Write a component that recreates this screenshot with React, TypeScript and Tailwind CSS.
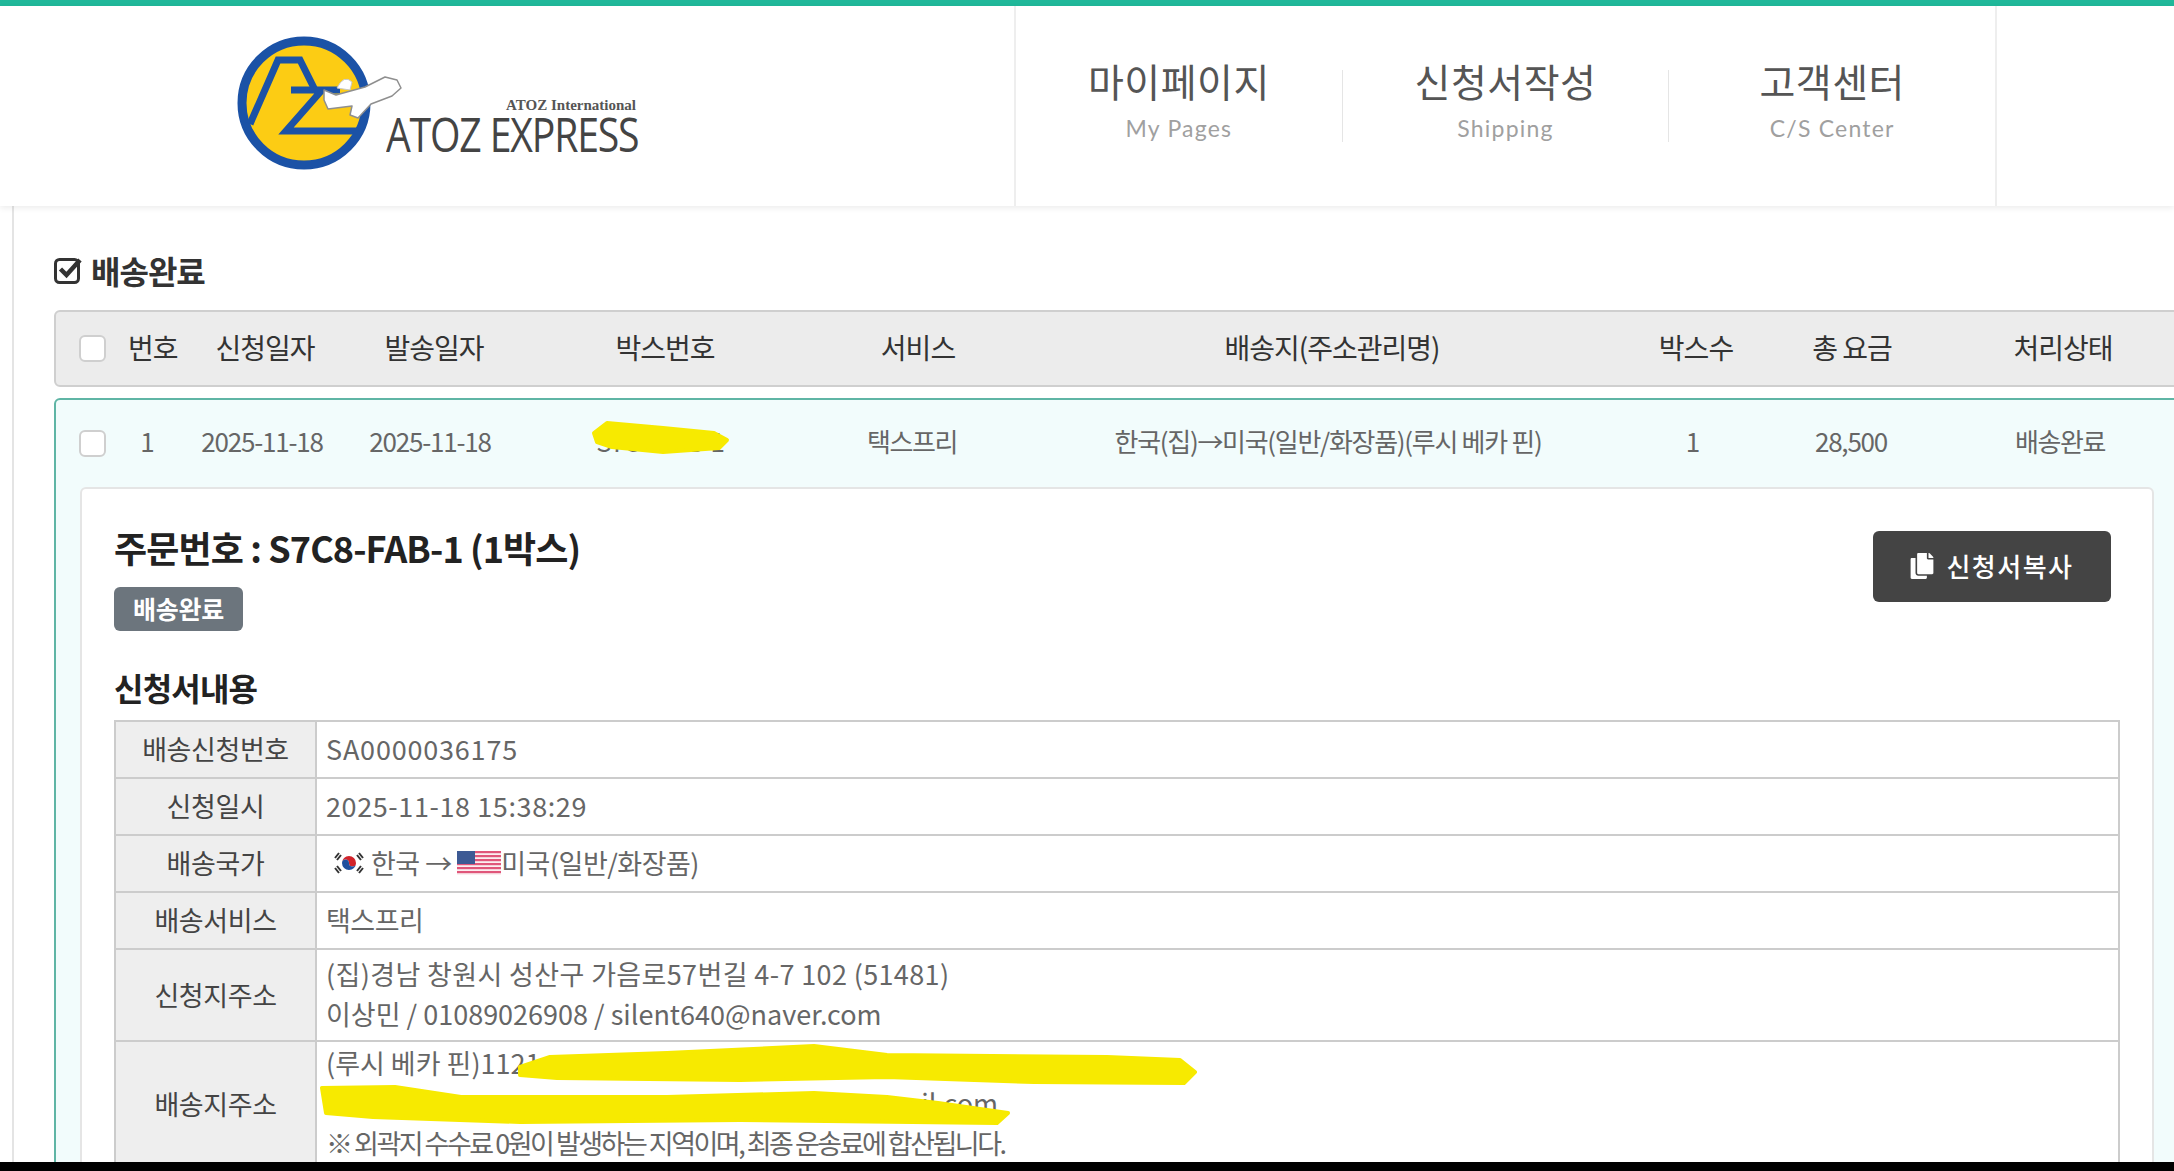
import React from 'react';
import { FaCopy } from 'react-icons/fa';

const FONT = '"Noto Sans CJK KR", "Noto Sans", sans-serif';

const HEAD_COLS = [
  { label: '번호', w: 'w-[42px]' },
  { label: '신청일자', w: 'w-[190px]' },
  { label: '발송일자', w: 'w-[148px]' },
  { label: '박스번호', w: 'w-[314px]' },
  { label: '서비스', w: 'w-[192px]' },
  { label: '배송지(주소관리명)', w: 'w-[636px]' },
  { label: '박스수', w: 'w-[92px]' },
  { label: '총 요금', w: 'w-[220px]' },
  { label: '처리상태', w: 'w-[202px]' },
];

const ROW_COLS = [
  { value: '1', w: 'w-[38px]', cls: 'tracking-[-1px]' },
  { value: '2025-11-18', w: 'w-[192px]', cls: 'tracking-[-1.2px]' },
  { value: '2025-11-18', w: 'w-[144px]', cls: 'tracking-[-1.2px]' },
  { value: 'S7C8-FAB-1', w: 'w-[316px]', cls: 'tracking-[-1.2px]' },
  { value: '택스프리', w: 'w-[188px]', cls: 'tracking-[-1.4px]' },
  { value: '한국(집)→미국(일반/화장품)(루시 베카 핀)', w: 'w-[644px]', cls: 'tracking-[-1.3px]' },
  { value: '1', w: 'w-[86px]', cls: '' },
  { value: '28,500', w: 'w-[230px]', cls: 'tracking-[-1.2px]' },
  { value: '배송완료', w: 'w-[188px]', cls: 'tracking-[-1.4px]' },
];

const NavItem = ({ title, sub }: { title: string; sub: string }) => (
  <div className="flex-1 flex flex-col items-center pt-[51px]">
    <div className="text-[39px] leading-[46px] font-normal text-[#555] tracking-[0.5px]">{title}</div>
    <div className="mt-[10px] text-[23px] leading-[30px] font-normal text-[#a0a0a0] tracking-[1.2px]" style={{ fontFamily: 'Lato, sans-serif' }}>
      {sub}
    </div>
  </div>
);

const Logo = () => (
  <div className="flex items-start pl-[236px] pt-[24px]">
    <svg width="168" height="145" viewBox="236 30 168 145" className="shrink-0">
      <circle cx="304" cy="103" r="62" fill="#fccc14" stroke="#1b52a6" strokeWidth="9" />
      <path d="M250 124 L278 60 L300 60 L315 90" fill="none" stroke="#1b52a6" strokeWidth="7" strokeLinejoin="miter" />
      <path d="M291 90 H340 M322 90 L286 131 H358" fill="none" stroke="#1b52a6" strokeWidth="7" />
      <path d="M337 88 Q344 74 352 82 L350 90 Z" fill="#fff" stroke="#c9c9c9" strokeWidth="1" />
      <path
        d="M324 90 L336 95 L365 87 L385 77 L397 80 L401 88 L392 96 L371 104 L358 118 L350 115 L352 106 L328 109 L324 100 Z"
        fill="#fff"
        stroke="#8f8f8f"
        strokeWidth="1.5"
        strokeLinejoin="round"
      />
    </svg>
    <div className="ml-[-18px] mt-[67px] w-[252px] flex flex-col items-end">
      <div className="text-[15px] leading-[16px] mb-[2px] mr-[2px] font-bold text-[#555] whitespace-nowrap" style={{ fontFamily: '"Liberation Serif", serif' }}>
        ATOZ International
      </div>
      <div
        className="self-start origin-left scale-x-[0.834] text-[47px] leading-[38px] text-[#444] tracking-[-1.4px] whitespace-nowrap"
        style={{ fontFamily: '"Open Sans", sans-serif' }}
      >
        ATOZ EXPRESS
      </div>
    </div>
  </div>
);

const Checkbox = () => <div className="w-[27px] h-[27px] bg-white border-2 border-[#cfcfcf] rounded-[6px] shrink-0" />;

const CheckedIcon = () => (
  <svg width="30" height="28" viewBox="0 0 30 28" className="shrink-0">
    <rect x="1.5" y="3.5" width="23" height="23" rx="4" fill="none" stroke="#333" strokeWidth="3" />
    <path d="M6.5 13 L12.5 19 L26 4" fill="none" stroke="#333" strokeWidth="4.5" />
  </svg>
);

const KoreaFlag = () => (
  <svg width="34" height="24" viewBox="0 0 34 24" className="shrink-0">
    <rect width="34" height="24" fill="#fff" />
    <path d="M10 12 a7 7 0 0 1 14 0 a3.5 3.5 0 0 1 -7 0 a3.5 3.5 0 0 0 -7 0 Z" fill="#d2232a" />
    <path d="M10 12 a7 7 0 0 0 14 0 a3.5 3.5 0 0 1 -7 0 a3.5 3.5 0 0 0 -7 0 Z" fill="#1f4f9e" />
    <path d="M3 7 L7 2 M5 9 L9 4 M27 2 L31 7 M25 4 L29 9 M3 17 L7 22 M5 15 L9 20 M27 22 L31 17 M25 20 L29 15" stroke="#333" strokeWidth="2" />
  </svg>
);

const UsFlag = () => (
  <svg width="44" height="24" viewBox="0 0 44 24" className="shrink-0">
    <rect width="44" height="24" fill="#fbeef0" />
    {[0, 4, 8, 12, 16, 20].map((y) => (
      <rect key={y} y={y} width="44" height="2.2" fill="#e0567a" />
    ))}
    <rect width="18" height="13" fill="#3d5a94" />
  </svg>
);

const InfoRow = ({ label, className, children }: { label: string; className: string; children: React.ReactNode }) => (
  <div className={`flex border-t-2 border-[#ccc] ${className}`}>
    <div className="w-[201px] shrink-0 flex items-center justify-center bg-[#eee] border-r-2 border-[#ccc] text-[27px] text-[#444] tracking-[-0.4px]">
      {label}
    </div>
    <div className="flex-1 flex flex-col justify-center px-[9px] pb-[2px] text-[27px] text-[#666] leading-[40px]">{children}</div>
  </div>
);

const App = () => {
  return (
    <div className="relative h-screen flex flex-col overflow-hidden bg-white" style={{ fontFamily: FONT }}>
      <div className="h-[6px] bg-[#20b89a] shrink-0" />

      {/* Header */}
      <header className="h-[200px] shrink-0 flex bg-white shadow-[0_2px_6px_rgba(0,0,0,0.08)] relative z-10">
        <div className="w-[1014px] shrink-0">
          <Logo />
        </div>
        <nav className="w-[983px] shrink-0 flex border-x-2 border-[#eee]">
          <NavItem title="마이페이지" sub="My Pages" />
          <div className="w-px h-[72px] mt-[64px] bg-[#e5e5e5]" />
          <NavItem title="신청서작성" sub="Shipping" />
          <div className="w-px h-[72px] mt-[64px] bg-[#e5e5e5]" />
          <NavItem title="고객센터" sub="C/S Center" />
        </nav>
      </header>

      {/* Body */}
      <main className="flex-1 min-h-0 overflow-hidden ml-[12px] border-l-2 border-[#e4e4e4] pl-[40px]">
        <h2 className="mt-[46px] h-[36px] flex items-center gap-[7px] text-[32px] font-bold text-[#333] tracking-[-1px]">
          <CheckedIcon />
          배송완료
        </h2>

        <div className="mt-[22px] w-[2160px] h-[77px] flex items-center bg-[#ececec] border-2 border-[#cfcfcf] rounded-[6px] text-[28px] text-[#333] tracking-[-1px] text-center whitespace-nowrap">
          <div className="w-[70px] flex justify-center pl-[2px]">
            <Checkbox />
          </div>
          <div className="w-[2px] shrink-0" />
          {HEAD_COLS.map((col) => (
            <div key={col.label} className={`${col.w} shrink-0 pb-[4px]`}>
              {col.label}
            </div>
          ))}
        </div>

        <div className="mt-[11px] w-[2160px] h-[800px] bg-[#f2fcfc] border-2 border-[#5fb5a5] rounded-[6px]">
          <div className="h-[87px] flex items-center text-[26px] text-[#666] text-center whitespace-nowrap">
            <div className="w-[70px] flex justify-center pl-[3px]">
              <Checkbox />
            </div>
            <div className="w-[2px] shrink-0" />
            {ROW_COLS.map((col, i) => (
              <div key={i} className={`${col.w} ${col.cls} shrink-0 pb-[7px]`}>
                {col.value}
              </div>
            ))}
          </div>

          {/* Order detail card */}
          <div className="ml-[24px] w-[2074px] h-[700px] bg-white border-2 border-[#e5e5e5] rounded-[6px] px-[32px] pt-[35px]">
            <div className="flex justify-between items-start">
              <div className="text-[36px] leading-[46px] font-bold text-[#222] tracking-[-0.9px]">주문번호 : S7C8-FAB-1 (1박스)</div>
              <button className="mt-[7px] mr-[9px] w-[238px] h-[71px] pb-[2px] flex items-center justify-center gap-[12px] bg-[#444] rounded-[6px] text-white text-[26px] font-medium tracking-[1.5px]">
                <FaCopy className="w-[24px] h-[26px]" />
                신청서복사
              </button>
            </div>
            <div className="mt-[-15px] w-[129px] h-[44px] flex items-center justify-center bg-[#6c757d] rounded-[6px] text-white text-[25px] font-bold tracking-[-0.3px]">
              배송완료
            </div>
            <h3 className="mt-[36px] text-[32px] leading-[40px] font-bold text-[#222] tracking-[-0.8px]">신청서내용</h3>

            <div className="mt-[13px] w-[2006px] border-x-2 border-[#ccc]">
              <InfoRow label="배송신청번호" className="h-[57px]">
                <span className="tracking-[0.8px]">SA0000036175</span>
              </InfoRow>
              <InfoRow label="신청일시" className="h-[57px]">
                <span className="tracking-[0.6px]">2025-11-18 15:38:29</span>
              </InfoRow>
              <InfoRow label="배송국가" className="h-[57px]">
                <div className="flex items-center tracking-[-0.5px]">
                  <span className="ml-[6px] mr-[5px]">
                    <KoreaFlag />
                  </span>
                  한국 →&nbsp;
                  <UsFlag />
                  미국(일반/화장품)
                </div>
              </InfoRow>
              <InfoRow label="배송서비스" className="h-[57px]">
                <span className="tracking-[-0.5px]">택스프리</span>
              </InfoRow>
              <InfoRow label="신청지주소" className="h-[92px]">
                <span className="tracking-[0.37px]">(집)경남 창원시 성산구 가음로57번길 4-7 102 (51481)</span>
                <span>이상민 / 01089026908 / silent640@naver.com</span>
              </InfoRow>
              <InfoRow label="배송지주소" className="h-[126px]">
                <span>(루시 베카 핀)1121</span>
                <span className="text-right w-[672px]">il.com</span>
                <span className="tracking-[-2.5px]">※ 외곽지 수수료 0원이 발생하는 지역이며, 최종 운송료에 합산됩니다.</span>
              </InfoRow>
            </div>
          </div>
        </div>
      </main>

      <div className="h-[9px] bg-black shrink-0 relative z-10" />

      {/* Yellow marker scribbles over the redacted text */}
      <svg className="absolute inset-0 pointer-events-none" width="2174" height="1171">
        <g fill="#f7ea00" stroke="#f7ea00" strokeWidth="4" strokeLinejoin="round">
          <path d="M594 433 L607 423 L663 428 L714 433 L727 440 L719 448 L663 452 L612 447 L597 442 Z" />
          <path d="M520 1067 L550 1057 L667 1053 L814 1046 L887 1055 L1107 1057 L1180 1060 L1195 1072 L1184 1083 L1034 1082 L887 1077 L740 1080 L557 1078 L520 1075 Z" />
          <path d="M322 1088 L395 1087 L461 1097 L667 1097 L814 1093 L887 1097 L938 1103 L1008 1113 L997 1123 L740 1120 L520 1122 L373 1117 L326 1113 Z" />
        </g>
      </svg>
    </div>
  );
};

export default App;
